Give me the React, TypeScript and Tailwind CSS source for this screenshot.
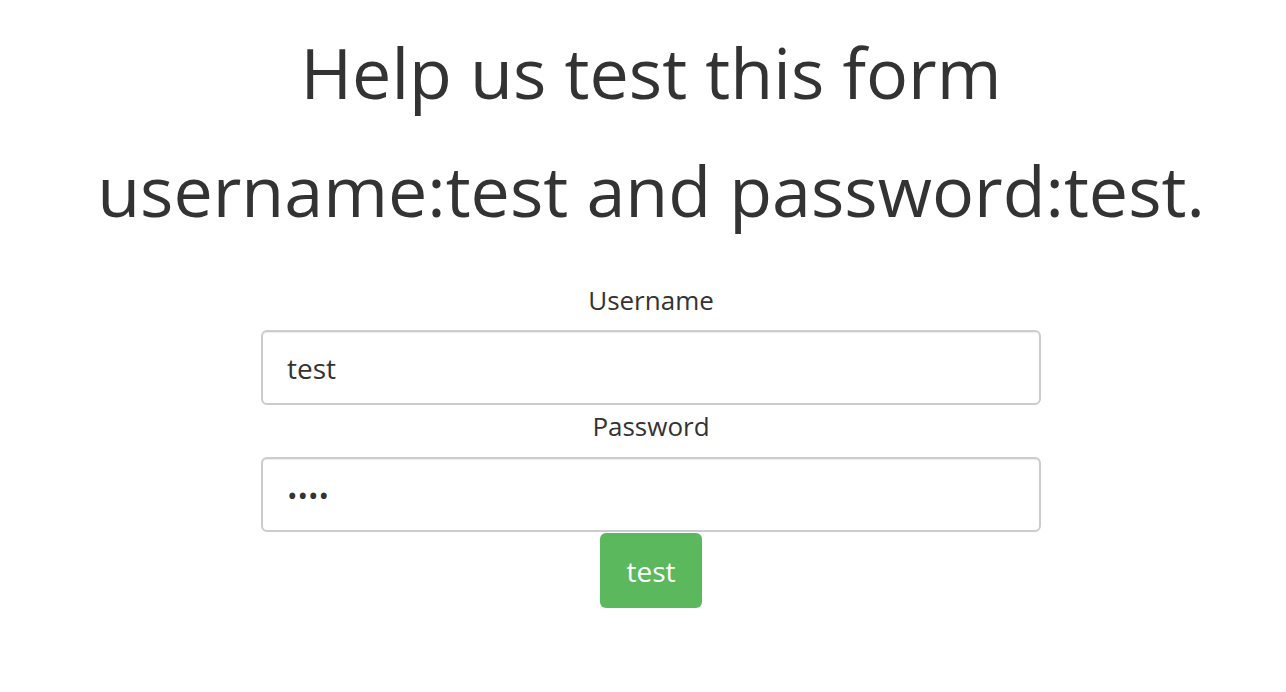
export default function App() {
  return (
    <div className="min-h-[692px] w-full bg-white pl-[16px] text-[#333333] font-['Open_Sans',sans-serif]">
      <div className="flex flex-col items-center pt-[13px]">
        <h1 className="whitespace-nowrap text-center text-[70px] leading-[118px]">Help us test this form</h1>
        <h1 className="whitespace-nowrap text-center text-[70px] leading-[118px]">username:test and password:test.</h1>
        <form className="mt-[33px] flex w-[780px] flex-col items-center">
          <label className="text-[26px] leading-[36px]">Username</label>
          <input
            className="mt-[12px] h-[75px] w-[780px] rounded-[6px] border-2 border-[#cccccc] px-[24px] text-[28px] text-[#333333] shadow-[inset_0_1px_1px_rgba(0,0,0,0.075)] outline-none"
            defaultValue="test"
            type="text"
          />
          <label className="mt-[3px] text-[26px] leading-[36px]">Password</label>
          <input
            className="mt-[13px] h-[75px] w-[780px] rounded-[6px] border-2 border-[#cccccc] px-[24px] text-[28px] text-[#333333] shadow-[inset_0_1px_1px_rgba(0,0,0,0.075)] outline-none"
            defaultValue="test"
            type="password"
          />
          <button
            type="button"
            className="mt-[1px] h-[75px] w-[102px] rounded-[6px] bg-[#5cb85c] text-[28px] text-white"
          >
            test
          </button>
        </form>
      </div>
    </div>
  );
}
